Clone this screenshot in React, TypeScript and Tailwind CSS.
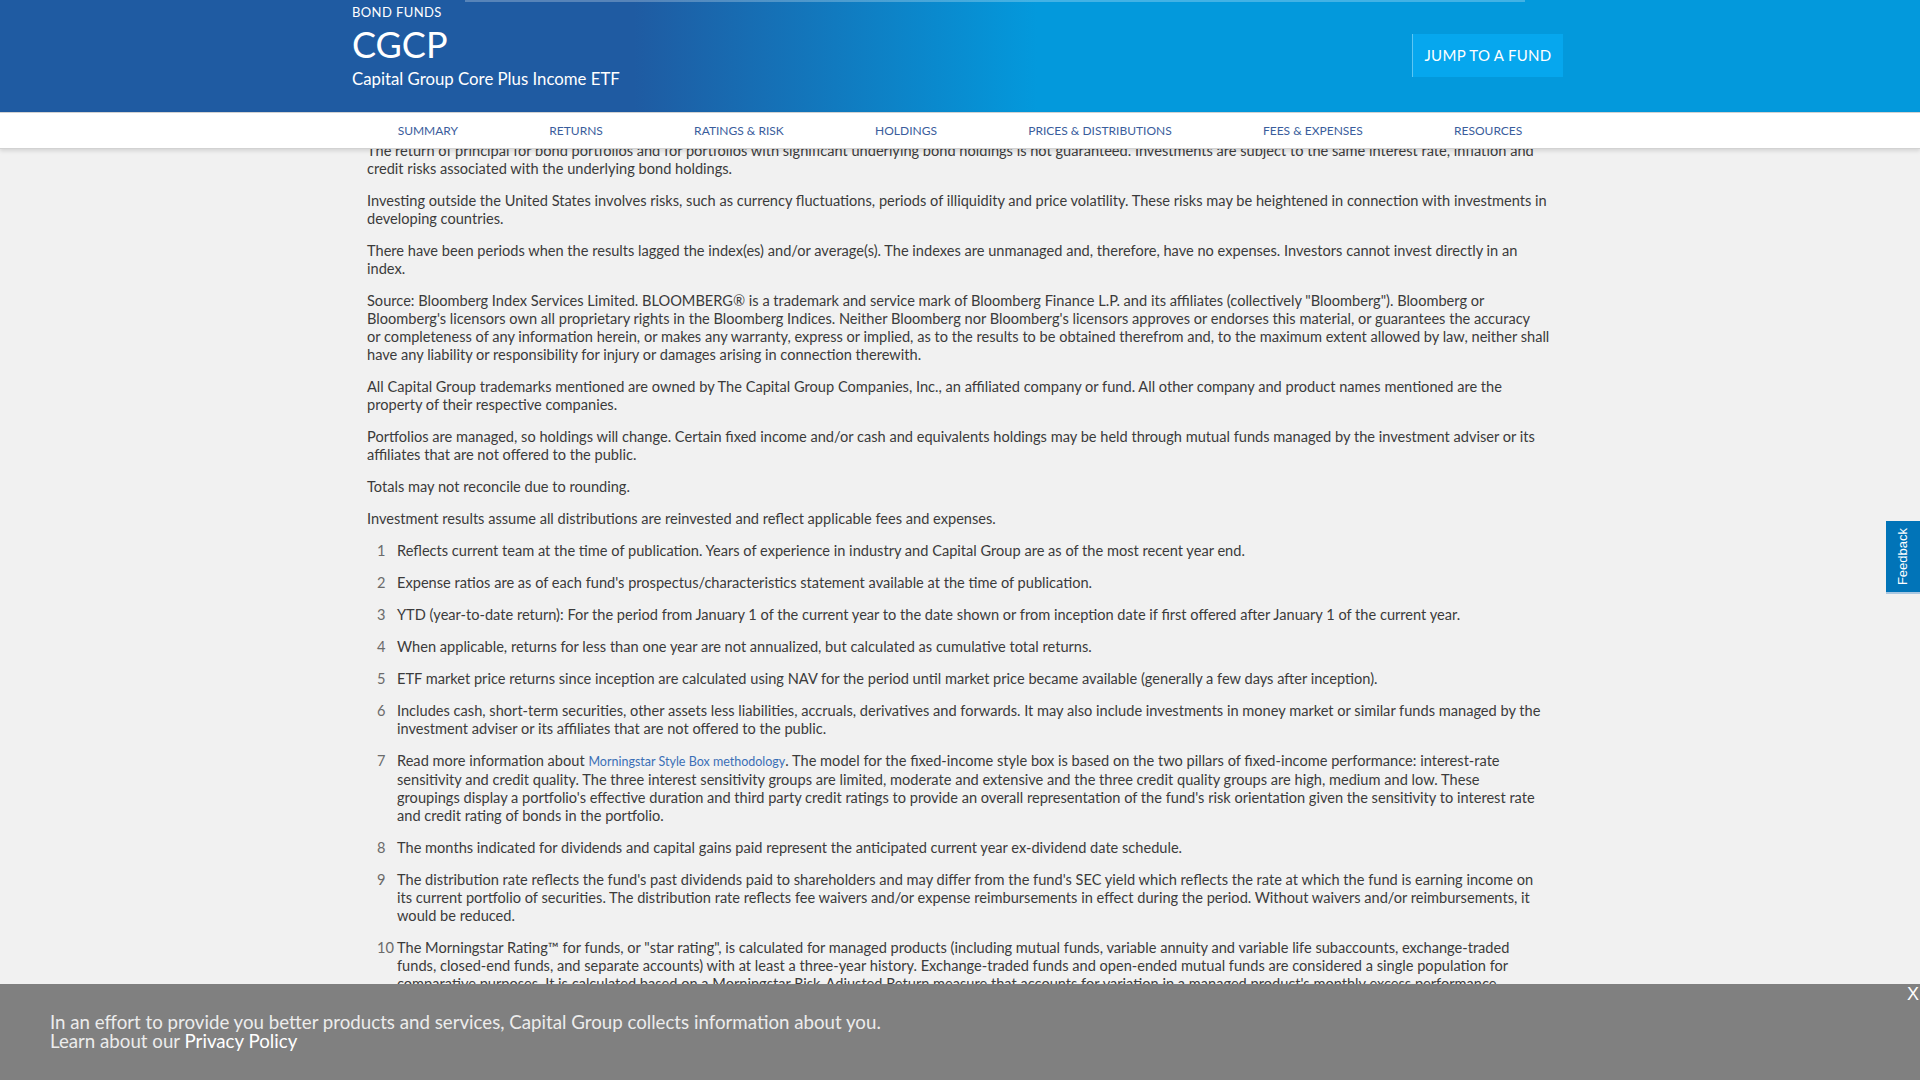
import React from 'react';

const tabs = [
  'Summary',
  'Returns',
  'Ratings & Risk',
  'Holdings',
  'Prices & Distributions',
  'Fees & Expenses',
  'Resources',
];

const paragraphs = [
  'The return of principal for bond portfolios and for portfolios with significant underlying bond holdings is not guaranteed. Investments are subject to the same interest rate, inflation and credit risks associated with the underlying bond holdings.',
  'Investing outside the United States involves risks, such as currency fluctuations, periods of illiquidity and price volatility. These risks may be heightened in connection with investments in developing countries.',
  'There have been periods when the results lagged the index(es) and/or average(s). The indexes are unmanaged and, therefore, have no expenses. Investors cannot invest directly in an index.',
  'Source: Bloomberg Index Services Limited. BLOOMBERG® is a trademark and service mark of Bloomberg Finance L.P. and its affiliates (collectively "Bloomberg"). Bloomberg or Bloomberg\'s licensors own all proprietary rights in the Bloomberg Indices. Neither Bloomberg nor Bloomberg\'s licensors approves or endorses this material, or guarantees the accuracy or\u00a0completeness of any information herein, or makes any warranty, express or implied, as to the results to be obtained therefrom and, to the maximum extent allowed by law, neither shall have any liability or responsibility for injury or damages arising in connection therewith.',
  'All Capital Group trademarks mentioned are owned by The Capital Group Companies, Inc., an affiliated company or fund. All other company and product names mentioned are the property of their respective companies.',
  'Portfolios are managed, so holdings will change. Certain fixed income and/or cash and equivalents holdings may be held through mutual funds managed by the investment adviser or its affiliates that are not offered to the public.',
  'Totals may not reconcile due to rounding.',
  'Investment results assume all distributions are reinvested and reflect applicable fees and expenses.',
];

const footnotes: React.ReactNode[] = [
  'Reflects current team at the time of publication. Years of experience in industry and Capital Group are as of the most recent year end.',
  "Expense ratios are as of each fund's prospectus/characteristics statement available at the time of publication.",
  'YTD (year-to-date return): For the period from January 1 of the current year to the date shown or from inception date if first offered after January 1 of the current year.',
  'When applicable, returns for less than one year are not annualized, but calculated as cumulative total returns.',
  'ETF market price returns since inception are calculated using NAV for the period until market price became available (generally a few days after inception).',
  'Includes cash, short-term securities, other assets less liabilities, accruals, derivatives and forwards. It may also include investments in money market or similar funds managed by the investment adviser or its affiliates that are not offered to the public.',
  <>
    Read more information about{' '}
    <a href="#" className="text-[12.5px] text-[#3b6fb6]">
      Morningstar Style Box methodology
    </a>
    . The model for the fixed-income style box is based on the two pillars of fixed-income performance: interest-rate
    sensitivity and credit quality. The three interest sensitivity groups are limited, moderate and extensive and the
    three credit quality groups are high, medium and low. These groupings display a portfolio's effective duration and
    third party credit ratings to provide an overall representation of the fund's risk orientation given the sensitivity
    to interest rate and credit rating of bonds in the portfolio.
  </>,
  'The months indicated for dividends and capital gains paid represent the anticipated current year ex-dividend date schedule.',
  "The distribution rate reflects the fund's past dividends paid to shareholders and may differ from the fund's SEC yield which reflects the rate at which the fund is earning income on its current portfolio of securities. The distribution rate reflects fee waivers and/or expense reimbursements in effect during the period. Without waivers and/or reimbursements, it would be reduced.",
  'The Morningstar Rating™ for funds, or "star rating", is calculated for managed products (including mutual funds, variable annuity and variable life subaccounts, exchange-traded funds, closed-end funds, and separate accounts) with at least a three-year history. Exchange-traded funds and open-ended mutual funds are considered a single population for comparative purposes. It is calculated based on a Morningstar Risk-Adjusted Return measure that accounts for variation in a managed product\'s monthly excess performance, placing more emphasis on downward variations and rewarding consistent performance.',
];

export default function App() {
  return (
    <div className="relative flex h-screen w-full flex-col overflow-hidden bg-[#f1f1f1] font-['Lato',sans-serif]">
      {/* Fund header */}
      <header className="relative h-[112px] shrink-0 bg-[linear-gradient(90deg,#1f5ba2_0%,#1f5ba2_33%,#0399dc_54%,#0399dc_100%)]">
        <div className="absolute left-[465px] top-0 h-[2px] w-[1060px] bg-white/25" />
        <div className="mx-auto flex h-full w-[1216px] items-start justify-between">
          <div className="pt-[4px] text-white">
            <div className="text-[13px] leading-[16px] tracking-[0.4px] uppercase">Bond Funds</div>
            <div className="mt-[4px] text-[36px] leading-[40px]">CGCP</div>
            <div className="mt-[4px] text-[16.8px] leading-[22px]">Capital Group Core Plus Income ETF</div>
          </div>
          <button className="mr-[5px] mt-[34px] h-[43px] w-[151px] border-l border-[#5cc6f4] bg-[#06a7ee] text-[15px] tracking-[0.3px] text-white uppercase">
            Jump to a fund
          </button>
        </div>
      </header>

      {/* Tabs */}
      <nav className="relative z-10 h-[37px] shrink-0 border-y border-[#d2d2d2] bg-white shadow-[0_2px_4px_rgba(0,0,0,0.12)]">
        <div className="mx-auto flex h-full w-[1216px] items-center justify-around">
          {tabs.map((t) => (
            <a key={t} href="#" className="text-[12px] text-[#3a5d9c] uppercase">
              {t}
            </a>
          ))}
        </div>
      </nav>

      {/* Disclosures */}
      <main className="min-h-0 flex-1 overflow-hidden">
        <div className="mx-auto -mt-[7px] w-[1216px] pl-[15px] pr-[17px] text-[14.6px] leading-[18px] text-[#3b3b3b]">
          {paragraphs.map((p, i) => (
            <p key={i} className="mb-[14px]">
              {p}
            </p>
          ))}
          <ol className="pl-[10px] pr-[8px]">
            {footnotes.map((f, i) => (
              <li key={i} className="mb-[14px] flex">
                <span className="w-[20px] shrink-0 text-[#6b6b6b]">{i + 1}</span>
                <span>{f}</span>
              </li>
            ))}
          </ol>
        </div>
      </main>

      {/* Feedback tab */}
      <div className="absolute right-0 top-[521px] flex h-[73px] w-[34px] items-center justify-center border-b-2 border-[#a9c7e1] bg-[#0174b8]">
        <span className="rotate-180 font-['Liberation_Sans',sans-serif] text-[13px] text-white [writing-mode:vertical-rl]">
          Feedback
        </span>
      </div>

      {/* Cookie notice */}
      <div className="absolute bottom-0 left-0 h-[96px] w-full bg-[#808080] pl-[50px] pt-[29px] text-[18.7px] leading-[19px] text-[#ececec]">
        <p>In an effort to provide you better products and services, Capital Group collects information about you.</p>
        <p>
          Learn about our{' '}
          <a href="#" className="text-white">
            Privacy Policy
          </a>
        </p>
        <button className="absolute right-[1px] top-[1px] font-['Liberation_Sans',sans-serif] text-[18px] leading-[18px] text-white">
          X
        </button>
      </div>
    </div>
  );
}
